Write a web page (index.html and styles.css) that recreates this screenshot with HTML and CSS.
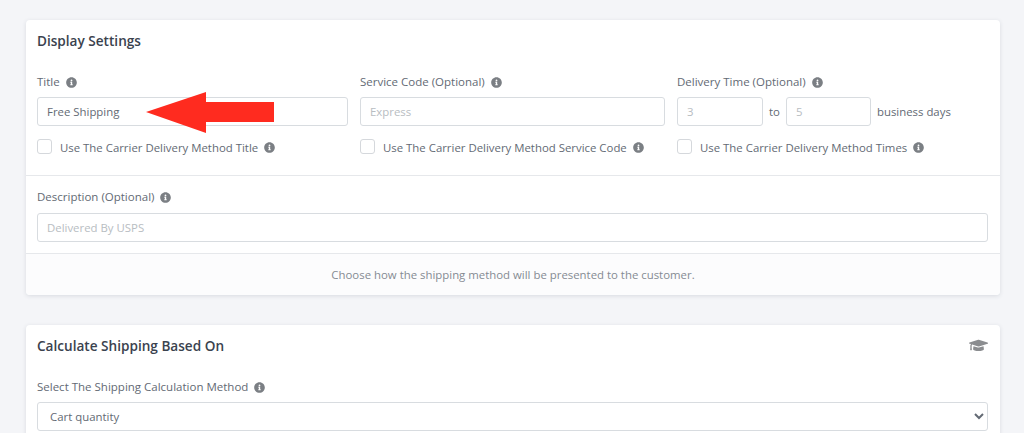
FILE: index.html
```html
<!DOCTYPE html>
<html lang="en">
<head>
<meta charset="utf-8">
<title>Shipping Method Settings</title>
<link rel="stylesheet" href="styles.css">
</head>
<body>
<svg class="sprite" width="0" height="0" aria-hidden="true">
  <symbol id="info" viewBox="0 0 512 512"><path d="M256 8C119 8 8 119 8 256s111 248 248 248 248-111 248-248S393 8 256 8zm0 110c23 0 42 19 42 42s-19 42-42 42-42-19-42-42 19-42 42-42zm56 254c0 7-5 12-12 12h-88c-7 0-12-5-12-12v-24c0-7 5-12 12-12h12v-64h-12c-7 0-12-5-12-12v-24c0-7 5-12 12-12h64c7 0 12 5 12 12v100h12c7 0 12 5 12 12v24z"/></symbol>
</svg>
<main class="page">
  <section class="card">
    <h2 class="card-title">Display Settings</h2>
    <div class="columns">
      <div class="field">
        <label class="label">Title <svg class="info"><use href="#info"/></svg></label>
        <input class="input" type="text" value="Free Shipping">
        <label class="check"><input class="box" type="checkbox"><span>Use The Carrier Delivery Method Title</span><svg class="info"><use href="#info"/></svg></label>
      </div>
      <div class="field">
        <label class="label">Service Code (Optional) <svg class="info"><use href="#info"/></svg></label>
        <input class="input" type="text" placeholder="Express">
        <label class="check"><input class="box" type="checkbox"><span>Use The Carrier Delivery Method Service Code</span><svg class="info"><use href="#info"/></svg></label>
      </div>
      <div class="field">
        <label class="label">Delivery Time (Optional) <svg class="info"><use href="#info"/></svg></label>
        <div class="time-row">
          <input class="input input-short" type="text" placeholder="3">
          <span class="to">to</span>
          <input class="input input-short" type="text" placeholder="5">
          <span class="days">business days</span>
        </div>
        <label class="check"><input class="box" type="checkbox"><span>Use The Carrier Delivery Method Times</span><svg class="info"><use href="#info"/></svg></label>
      </div>
    </div>
    <div class="desc">
      <label class="label">Description (Optional) <svg class="info"><use href="#info"/></svg></label>
      <input class="input" type="text" placeholder="Delivered By USPS">
    </div>
    <footer class="card-foot">Choose how the shipping method will be presented to the customer.</footer>
  </section>
  <section class="card card-second">
    <div class="head-row">
      <h2 class="card-title">Calculate Shipping Based On</h2>
      <svg class="cap" viewBox="0 0 640 512" aria-hidden="true"><path d="M623 136 331 46c-7-2-15-2-22 0L17 136c-22 7-22 33 0 40l51 16c-11 14-18 31-19 50-6 3-10 10-10 17 0 7 4 13 9 16L40 393c-1 4 2 7 6 7h44c4 0 7-3 6-7l-9-118c5-3 9-9 9-16 0-7-4-13-9-16 1-15 9-28 21-36l201 62c9 3 19 4 27 1l291-90c22-7 22-33-4-40zM332 306c-14 4-24 4-36 0l-145-45-14 103c0 35 82 64 183 64s183-29 183-64l-14-103-157 45z"/></svg>
    </div>
    <div class="method">
      <label class="label">Select The Shipping Calculation Method <svg class="info"><use href="#info"/></svg></label>
      <select class="select"><option>Cart quantity</option></select>
    </div>
  </section>
  <svg class="arrow" viewBox="0 0 128 41" aria-hidden="true"><polygon points="0,20 60,0 60,10 128,10 128,30 60,30 60,41"/></svg>
</main>
</body>
</html>
```
FILE: styles.css
```css
* { box-sizing: border-box; }
html, body { margin: 0; height: 433px; overflow: hidden; }
body { background: #f4f5f8; font-family: "Open Sans", sans-serif; font-size: 11.4px; color: #636a74; }
.sprite { position: absolute; }
.page { position: relative; padding: 20px 24px 0 26px; }
.card { background: #fff; border-radius: 4px; box-shadow: 0 1px 4px rgba(60, 66, 87, .14); }
.card-second { margin-top: 30px; border-radius: 4px 4px 0 0; height: 120px; padding: 11px 12px 0 11px; }
.card-title { margin: 0; font-size: 13.6px; line-height: 20px; font-weight: 600; color: #3a424e; }
.card > .card-title { padding: 11px 12px 0 11px; }
.columns { display: grid; grid-template-columns: 311px 305px 1fr; column-gap: 12px; padding: 23px 12px 0 11px; height: 125px; border-bottom: 1px solid #e6e8eb; }
.label { display: flex; align-items: center; gap: 6px; height: 16px; margin-bottom: 7px; font-size: 11.5px; line-height: 16px; color: #636a74; }
.info { width: 11px; height: 11px; fill: #7b7f84; flex: none; }
.input { display: block; width: 100%; height: 29px; padding: 0 9px; border: 1px solid #d8dce0; border-radius: 3px; background: #fff; font: 11.4px "Open Sans", sans-serif; color: #636a74; outline: none; }
.input::placeholder { color: #b8bdc2; opacity: 1; }
.input-short { width: 86px; flex: none; }
.input-short + .to + .input-short { width: 85px; }
.time-row { display: flex; align-items: center; }
.to { margin: 0 6px; }
.days { margin-left: 6px; }
.check { display: flex; align-items: flex-start; height: 16px; margin-top: 13px; line-height: 16px; }
.check span { margin-left: 8px; margin-right: 6px; margin-top: 1px; }
.check .info { margin-top: 3px; }
.box { appearance: none; margin: 0; width: 15px; height: 15px; border: 1px solid #d5d8dc; border-radius: 3px; background: #fff; flex: none; }
.desc { padding: 13px 12px 11px 11px; }
.desc .label { margin-bottom: 8px; }
.card-foot { height: 42px; display: flex; align-items: center; justify-content: center; background: #fcfcfd; border-top: 1px solid #e6e8eb; border-radius: 0 0 4px 4px; color: #858b93; }
.head-row { display: flex; justify-content: space-between; align-items: center; }
.cap { width: 19px; height: 16px; fill: #8b8d90; }
.method { padding-top: 23px; }
.method .label { margin-bottom: 7px; }
.select { display: block; width: 100%; height: 29px; padding: 0 8px; border: 1px solid #d8dce0; border-radius: 3px; background: #fff; font: 11.4px "Open Sans", sans-serif; color: #636a74; outline: none; }
.arrow { position: absolute; left: 146px; top: 92px; width: 128px; height: 41px; fill: #ff2b1f; }
```
